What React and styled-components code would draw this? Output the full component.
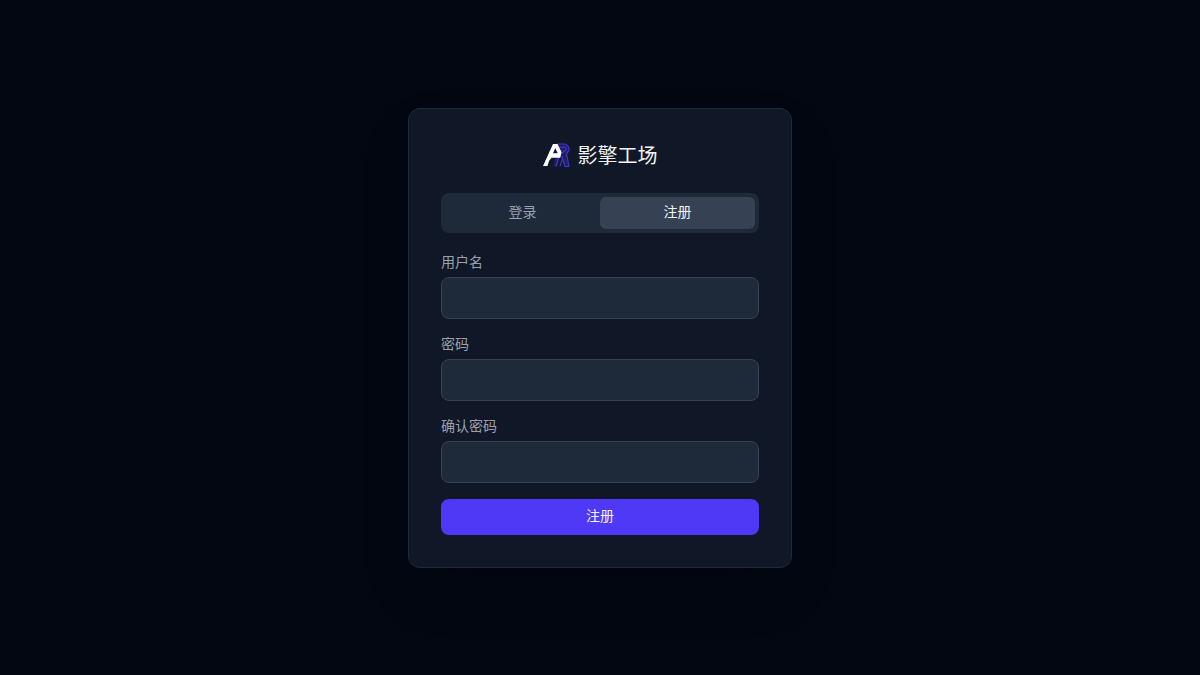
import React from "react";
import styled, { createGlobalStyle } from "styled-components";

const Global = createGlobalStyle`
  * { box-sizing: border-box; }
  html, body { margin: 0; padding: 0; background: #030712; }
  body { font-family: "Noto Sans CJK SC", sans-serif; }
`;
const Page = styled.div`
  width: 100%;
  height: 675px;
  display: flex;
  align-items: center;
  justify-content: center;
  background: #030712;
`;
const Card = styled.div`
  width: 384px;
  padding: 32px;
  background: #101828;
  border: 1px solid #1e2939;
  border-radius: 12px;
  box-shadow: 0 25px 50px -12px rgba(0, 0, 0, 0.25);
`;
const Brand = styled.div`
  height: 28px;
  margin-bottom: 24px;
  display: flex;
  align-items: center;
  justify-content: center;
  gap: 7px;
`;
const BrandName = styled.span`
  font-size: 20px;
  line-height: 28px;
  font-weight: 400;
  color: #f3f4f6;
`;
const Tabs = styled.div`
  display: grid;
  grid-template-columns: 1fr 1fr;
  padding: 4px;
  margin-bottom: 20px;
  background: #1e2939;
  border-radius: 8px;
`;
const Tab = styled.button`
  height: 32px;
  border: 0;
  border-radius: 6px;
  padding: 0 0 4px;
  font: inherit;
  font-size: 14px;
  color: ${(p) => (p.$active ? "#f3f4f6" : "#99a1af")};
  background: ${(p) => (p.$active ? "#364153" : "transparent")};
`;
const Form = styled.form`
  display: flex;
  flex-direction: column;
  gap: 16px;
`;
const Field = styled.label`
  display: flex;
  flex-direction: column;
  gap: 4px;
`;
const LabelText = styled.span`
  font-size: 14px;
  line-height: 16px;
  padding-bottom: 4px;
  color: #99a1af;
`;
const Input = styled.input`
  height: 42px;
  width: 100%;
  padding: 8px 12px;
  background: #1e2939;
  border: 1px solid #364153;
  border-radius: 8px;
  color: #f3f4f6;
`;
const Submit = styled.button`
  height: 36px;
  border: 0;
  border-radius: 8px;
  padding: 0 0 4px;
  background: #4f39f6;
  color: #f3f4f6;
  font: inherit;
  font-size: 14px;
`;

const Logo = () => (
  <svg width="28" height="28" viewBox="0 0 28 28" fill="none">
    <path
      d="M14 3h7a5 5 0 0 1 3.200 8.800l-.8.600L26 25.500h-4l-3.200-10.500h-2L13.500 25.500h-3z"
      fill="#1f1d6b"
    />
    <g stroke="#4038c0" strokeWidth="1.200" strokeLinejoin="round">
      <path d="M14 3h7a5 5 0 0 1 3.200 8.800l-.8.600L26 25.500h-4l-3.200-10.500" />
      <path d="M15.500 6.200h5.800a1.900 1.900 0 0 1 .8 3.600L18 12.500" />
      <path d="M16 16l-3 9.500M19.500 18l-2.500 7.500" />
    </g>
    <path
      fillRule="evenodd"
      d="M0 25 10 3h4.500l4 8-1.200 5.800H8.600L6 20 4.500 25zM12.300 7.300 10 12.300h4.800z"
      fill="#fff"
    />
  </svg>
);

export default function App() {
  return (
    <>
      <Global />
      <Page>
        <Card>
          <Brand>
            <Logo />
            <BrandName>影擎工场</BrandName>
          </Brand>
          <Tabs>
            <Tab type="button">登录</Tab>
            <Tab type="button" $active>注册</Tab>
          </Tabs>
          <Form>
            <Field><LabelText>用户名</LabelText><Input type="text" /></Field>
            <Field><LabelText>密码</LabelText><Input type="password" /></Field>
            <Field><LabelText>确认密码</LabelText><Input type="password" /></Field>
            <Submit type="button">注册</Submit>
          </Form>
        </Card>
      </Page>
    </>
  );
}
